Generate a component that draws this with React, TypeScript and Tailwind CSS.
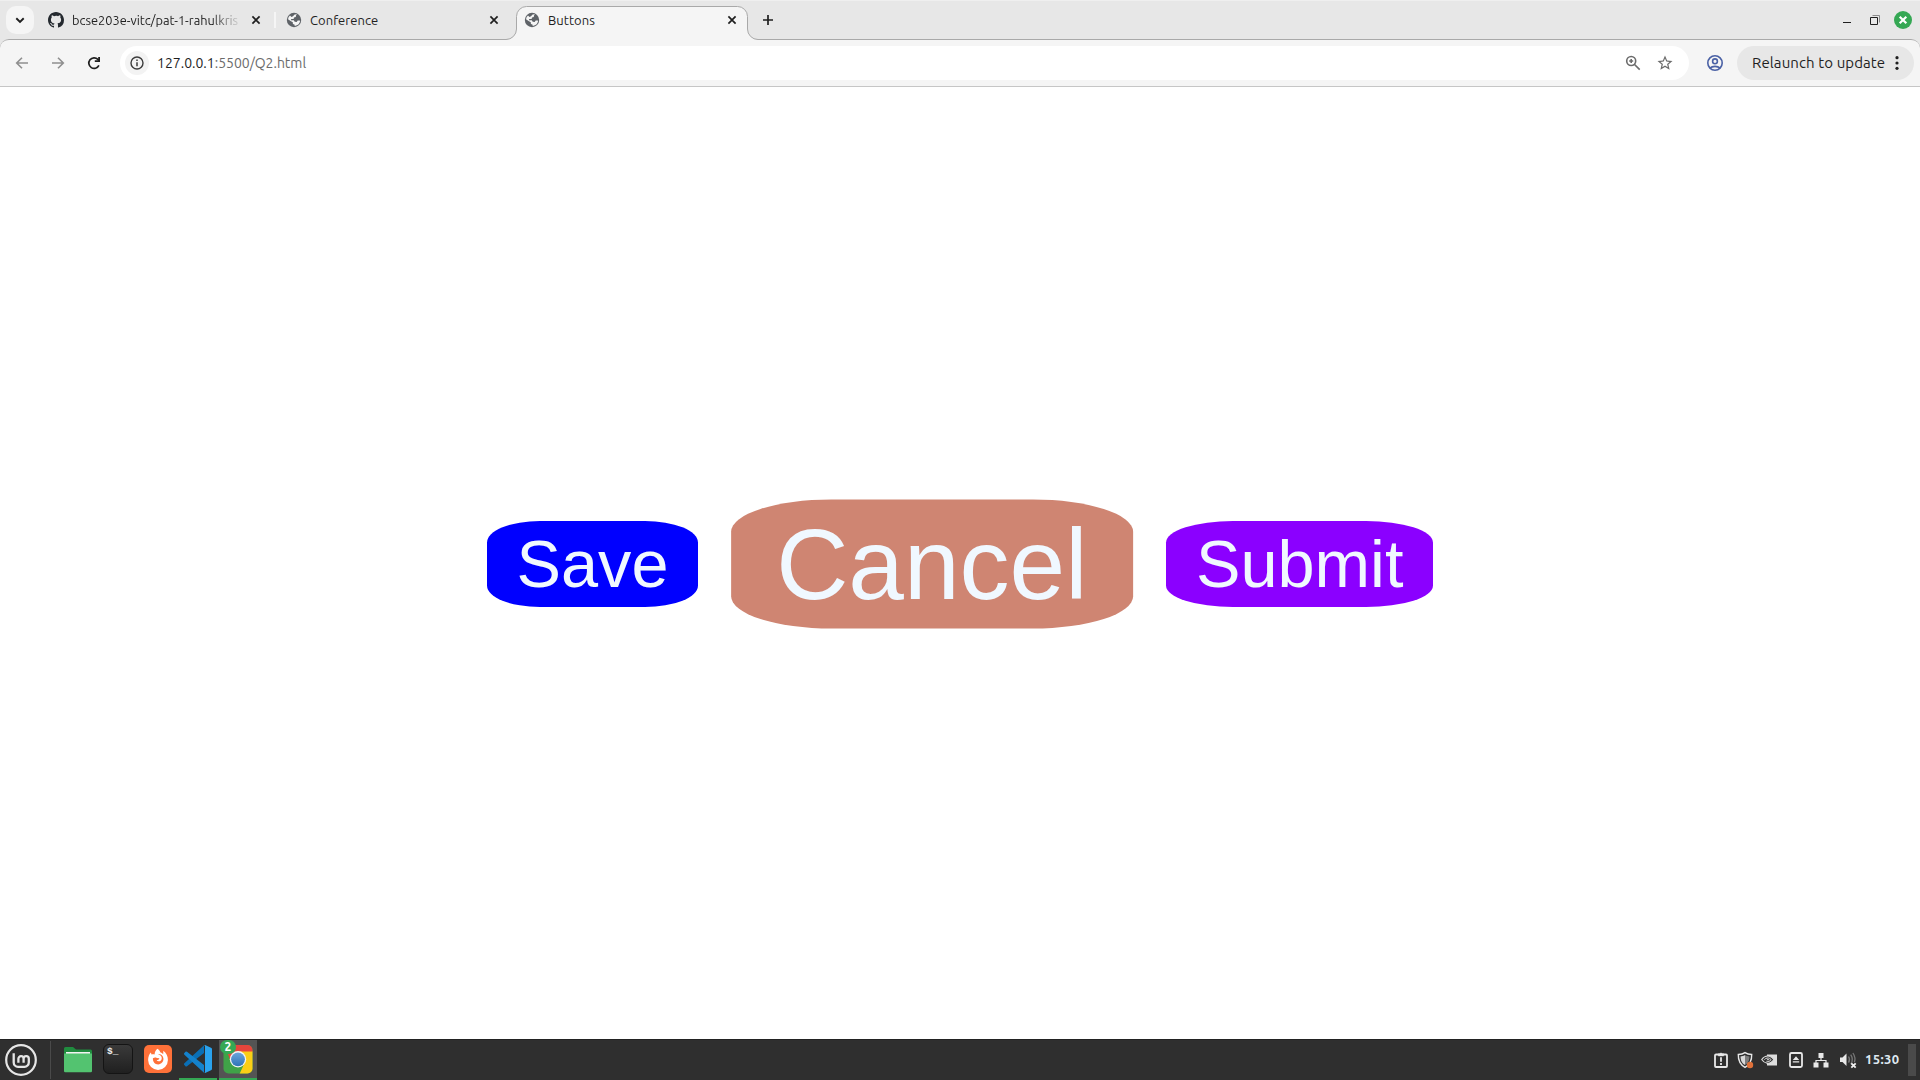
import React from "react";

function Globe() {
  return (
    <svg viewBox="0 0 16 16" className="size-4 shrink-0">
      <circle cx="8" cy="8" r="7.2" fill="#5f6368" />
      <path
        d="M8.600 2.400 11 2.200 10 3.500 9.800 5 8 5.600 7.600 7H5.200L5 8.300h2.800l.9 1.500 2 .1 1-1.300 2-.2.4.7a6 6 0 0 1-5.300 4.800l-.4-1.300-1.500-.6-.1-1.700L5 9.300 2 7.200A6 6 0 0 1 4 3.600L5.500 5 7 4.200z"
        fill="#f5f5f5"
      />
    </svg>
  );
}

function Close() {
  return (
    <svg viewBox="0 0 16 16" className="size-4 shrink-0" stroke="#1f1f1f" strokeWidth="1.7">
      <path d="M4.400 4.400l7.200 7.200M11.600 4.400l-7.200 7.200" />
    </svg>
  );
}

function TabStrip() {
  return (
    <div className="flex h-[39px] items-start border-t border-[#efefef] bg-[#e7e7e7]">
      <div className="ml-1.5 mt-[5px] flex size-7 items-center justify-center rounded-[10px] bg-[#f5f5f5]">
        <svg viewBox="0 0 16 16" className="size-4" fill="none" stroke="#1f1f1f" strokeWidth="1.9">
          <path d="M4.300 6.300 8 9.900l3.700-3.600" />
        </svg>
      </div>
      <div className="ml-[14px] flex h-[38px] w-[226px] items-center">
        <svg viewBox="0 0 16 16" className="size-4 shrink-0" fill="#24292f">
          <path d="M8 0C3.58 0 0 3.58 0 8c0 3.54 2.29 6.53 5.47 7.59.4.07.55-.17.55-.38 0-.19-.01-.82-.01-1.49-2.01.37-2.53-.49-2.69-.94-.09-.23-.48-.94-.82-1.13-.28-.15-.68-.52-.01-.53.63-.01 1.08.58 1.23.82.72 1.21 1.87.87 2.33.66.07-.52.28-.87.51-1.07-1.78-.2-3.64-.89-3.64-3.95 0-.87.31-1.59.82-2.15-.08-.2-.36-1.02.08-2.12 0 0 .67-.21 2.2.82A7.6 7.6 0 0 1 8 3.87c.68 0 1.36.09 2 .27 1.53-1.04 2.2-.82 2.2-.82.44 1.1.16 1.92.08 2.12.51.56.82 1.27.82 2.15 0 3.07-1.87 3.75-3.65 3.95.29.25.54.73.54 1.48 0 1.07-.01 1.93-.01 2.2 0 .21.15.46.55.38A8.01 8.01 0 0 0 16 8c0-4.42-3.58-8-8-8" />
        </svg>
        <span className="ml-2 w-[168px] overflow-hidden whitespace-nowrap pt-px text-[12.8px] text-[#1f1f1f] [mask-image:linear-gradient(to_right,black_140px,transparent_170px)]">
          bcse203e-vitc/pat-1-rahulkris
        </span>
        <span className="ml-2">
          <Close />
        </span>
      </div>
      <div className="mt-[11px] h-4 w-[2px] bg-[#f5f5f5]" />
      <div className="ml-[10px] flex h-[38px] w-[220px] shrink-0 items-center">
        <Globe />
        <span className="ml-2 w-[176px] pt-px text-[13px] tracking-[0.05px] text-[#1f1f1f]">Conference</span>
        <Close />
      </div>
      <svg viewBox="0 0 252 34" className="relative z-10 -mr-[252px] mt-[5px] h-[34px] w-[252px] shrink-0">
        <path
          d="M0 33.500A10.500 10.500 0 0 0 10.500 23V10.500A10 10 0 0 1 20.500.5H231.500A10 10 0 0 1 241.500 10.500V23A10.500 10.500 0 0 0 252 33.500V34H0z"
          fill="#f5f5f5"
        />
        <path
          d="M0 33.500A10.500 10.500 0 0 0 10.500 23V10.500A10 10 0 0 1 20.500.5H231.500A10 10 0 0 1 241.500 10.500V23A10.500 10.500 0 0 0 252 33.500"
          fill="none"
          stroke="#a9a9a9"
        />
      </svg>
      <div className="relative z-10 ml-[18px] flex h-[38px] w-[224px] items-center">
        <Globe />
        <span className="ml-2 w-[176px] pt-px text-[13px] tracking-[0.05px] text-[#1f1f1f]">Buttons</span>
        <Close />
      </div>
      <svg viewBox="0 0 16 16" className="ml-3 mt-[11px] size-4" stroke="#1f1f1f" strokeWidth="1.7">
        <path d="M8 3v10M3 8h10" />
      </svg>
      <div className="ml-auto flex h-[38px] items-center pr-2">
        <svg viewBox="0 0 10 10" className="size-[10px]" stroke="#1f1f1f" strokeWidth="1">
          <path d="M1 7.500h8" />
        </svg>
        <svg viewBox="0 0 12 12" className="ml-[17px] size-3" fill="none">
          <path d="M3.500 1.500h7v7" stroke="#8b8b8b" />
          <path d="M1.500 3.500h7v7h-7z" stroke="#1f1f1f" />
        </svg>
        <svg viewBox="0 0 18 18" className="ml-[13px] size-[18px]">
          <circle cx="9" cy="9" r="9" fill="#35a854" />
          <path d="M5.700 5.700l6.600 6.600M12.300 5.700l-6.600 6.600" stroke="#fff" strokeWidth="2.200" />
        </svg>
      </div>
    </div>
  );
}

function Toolbar() {
  return (
    <div className="bg-[#e7e7e7]">
      <div className="flex h-[48px] items-center rounded-t-[9px] border-t border-[#a9a9a9] bg-[#f5f5f5] pb-[1px] shadow-[inset_0_-1px_0_#c6c6c6]">
        <svg viewBox="0 0 16 16" className="ml-[14px] size-4" fill="none" stroke="#8f8f8f" strokeWidth="1.600">
          <path d="M14 8H3M8 2.700 2.700 8 8 13.300" />
        </svg>
        <svg viewBox="0 0 16 16" className="ml-5 size-4" fill="none" stroke="#8f8f8f" strokeWidth="1.600">
          <path d="M2 8h11M8 2.700 13.300 8 8 13.300" />
        </svg>
        <svg viewBox="0 0 16 16" className="ml-5 size-4">
          <path d="M12.900 10.400A5.300 5.300 0 1 1 11.900 4.400l1 1" fill="none" stroke="#1f1f1f" strokeWidth="1.700" />
          <path d="M14 1.900v5.200H8.800V5.300h3.400V1.900z" fill="#1f1f1f" />
        </svg>
        <div className="ml-[18px] flex h-[34px] w-[1569px] items-center rounded-full bg-white pl-[5px] pr-[15px]">
          <div className="flex size-6 items-center justify-center rounded-full bg-[#f3f3f3]">
            <svg viewBox="0 0 16 16" className="size-4" fill="none" stroke="#3c3c3c" strokeWidth="1.400">
              <circle cx="8" cy="8" r="6" />
              <path d="M8 7.200v4M8 4.500v1.500" strokeWidth="1.500" />
            </svg>
          </div>
          <span className="ml-2 pb-px text-[14px] leading-none text-[#6b6b6b]">
            <span className="text-[#1f1f1f]">127.0.0.1</span>:5500/Q2.html
          </span>
          <svg viewBox="0 0 16 16" className="ml-auto size-4" fill="none" stroke="#6b6b6b" strokeWidth="1.600">
            <circle cx="6.200" cy="6" r="4.500" />
            <path d="M9.300 9.200 14.700 14.600M6.200 4v4M4.200 6h4" />
          </svg>
          <svg viewBox="0 0 24 24" className="ml-[15px] size-[18px]" fill="#6b6b6b">
            <path d="M22 9.240l-7.190-.62L12 2 9.190 8.630 2 9.240l5.460 4.730L5.820 21 12 17.270 18.180 21l-1.630-7.030zM12 15.400l-3.760 2.270 1-4.280-3.320-2.880 4.380-.38L12 6.100l1.710 4.040 4.380.38-3.320 2.880 1 4.280z" />
          </svg>
        </div>
        <svg viewBox="0 0 18 18" className="ml-[17px] size-[18px]" fill="none" stroke="#4a61a5" strokeWidth="1.600">
          <circle cx="9" cy="9" r="7.200" />
          <circle cx="9" cy="7.300" r="2.400" />
          <path d="M3.800 14.200c2.800-2.500 7.600-2.500 10.400 0" />
        </svg>
        <div className="ml-[13px] flex h-[34px] w-[177px] items-center rounded-full bg-[#e7e7e7] pl-[15px]">
          <span className="w-[137px] whitespace-nowrap text-[15px] tracking-[0.1px] text-[#1f1f1f]">Relaunch to update</span>
          <svg viewBox="0 0 16 16" className="size-4" fill="#1f1f1f">
            <circle cx="8" cy="2.700" r="1.600" />
            <circle cx="8" cy="8" r="1.600" />
            <circle cx="8" cy="13.300" r="1.600" />
          </svg>
        </div>
      </div>
    </div>
  );
}

const pill =
  "rounded-[25%] px-[30px] py-[5px] font-['Liberation_Sans',Arial,sans-serif] text-[66.667px] leading-[76px] text-[#f0f8ff]";

function Launchers() {
  return (
    <>
      <svg viewBox="0 0 34 34" className="ml-1 size-[34px]" fill="none" stroke="#e6e6e6">
        <circle cx="17" cy="17" r="14.800" strokeWidth="2.200" />
        <path
          d="M9.700 10.200V19.500a4.300 4.300 0 0 0 4.300 4.300H20.500a4.300 4.300 0 0 0 4.300-4.300V15.800a2.600 2.600 0 0 0-5.200 0V19.700M19.600 15.800a2.600 2.600 0 0 0-5.200 0V19.700"
          strokeWidth="2.300"
        />
      </svg>
      <div className="ml-3 h-[38px] w-px bg-[#4a4a4a]" />
      <svg viewBox="0 0 28 28" className="mb-0.5 ml-[13px] size-7">
        <path d="M0 3.500A1.500 1.500 0 0 1 1.500 2H9l3 2.500h14.500A1.500 1.500 0 0 1 28 6v6H0z" fill="#208c3f" />
        <path d="M2 7h24v3H2z" fill="#f3f3f3" />
        <path d="M0 8.500h28V26a1.300 1.300 0 0 1-1.300 1.300H1.300A1.300 1.300 0 0 1 0 26z" fill="#53c370" />
      </svg>
      <div className="mb-0.5 ml-[11px] h-[30px] w-[30px] rounded-[6px] border border-[#141414] bg-gradient-to-b from-[#3a3a3a] to-[#202020] pl-[3px] pt-0.5 font-['Liberation_Mono',monospace] text-[9.500px] font-bold leading-[10px] text-[#eeeeee]">
        $_
      </div>
      <svg viewBox="0 0 28 28" className="mb-0.5 ml-[11px] size-7">
        <rect width="28" height="28" rx="5" fill="#ff7139" />
        <path
          d="M13.300 3.700c1.800 1 2.900 2.600 3.200 3.900 1.200.2 2.200.9 2.700 1.700l.1-3.500c3 2.200 4.700 5.600 4.600 9.100a9.900 9.900 0 0 1-19.800.2c0-3.500 1.300-6 2.700-7.600l.8 2c1.100-.5 2.100-.4 3 0 .1-2.400 1-4.200 2.700-5.800z"
          fill="#fff"
        />
        <path
          d="M8.900 13.200c1.500-.8 2.800-.8 3.900-.2l2.600.2c-.3 1.300-1.400 1.700-2.800 2 .7 1.300 2.800 1.500 4.300.2 1.400-1.200 1-3.500-.1-4.600-.8-.8-1.600-1.200-2.700-1.100 2.300-1.200 5 .9 5.300 3.900.3 3.200-2.100 5.800-5.200 5.800-3.300 0-5.500-2.700-5.300-6.200z"
          fill="#ff7139"
        />
      </svg>
      <div className="ml-[7px] flex h-10 w-[38px] items-center justify-center border-b-2 border-[#35a854]">
        <svg viewBox="0 0 28 28" className="size-7">
          <path d="M20 .3v7.700L3 21.200a1.300 1.300 0 0 1-1.600 0L.4 20.100a1.300 1.300 0 0 1 0-1.800z" fill="#0a6fb5" />
          <path d="M20 27.700v-7.700L3 6.800a1.300 1.300 0 0 0-1.600 0L.4 7.900a1.300 1.300 0 0 0 0 1.800z" fill="#1482cc" />
          <path d="M19.800.3a1.700 1.700 0 0 1 1.800-.1L27 2.800a1.700 1.700 0 0 1 1 1.500v19.400a1.700 1.700 0 0 1-1 1.500l-5.400 2.600a1.700 1.700 0 0 1-1.900-.2c.6.6 1.300.2 1.300-.7V1.100c0-.8-.7-1.200-1.200-.8z" fill="#2aa3ee" />
        </svg>
      </div>
      <div className="relative ml-0.5 flex h-10 w-[38px] items-center justify-center border-b-2 border-[#35a854] bg-[#545454]">
        <svg viewBox="0 0 30 30" className="size-[30px]">
          <defs>
            <clipPath id="chromeTile">
              <rect x=".5" y="1" width="29" height="28.500" rx="5" />
            </clipPath>
            <linearGradient id="chromeBlue" x2="0" y2="1">
              <stop stopColor="#6ca5dc" />
              <stop offset="1" stopColor="#2f73b7" />
            </linearGradient>
          </defs>
          <g clipPath="url(#chromeTile)">
            <path d="M0 0h30v30H0z" fill="#40a348" />
            <path d="M1 0h29v8H15l-7 10z" fill="#e8453c" />
            <path d="M15 7.500h15v22.500H16.500L22 18z" fill="#fbce16" />
          </g>
          <circle cx="15" cy="15.300" r="8.200" fill="#f4f4f4" />
          <circle cx="15" cy="15.300" r="6.900" fill="url(#chromeBlue)" />
        </svg>
        <span className="absolute left-px top-0 flex h-[14px] w-4 items-center justify-center rounded-full bg-[#35a854] text-[12px] font-bold leading-none text-white">
          2
        </span>
      </div>
    </>
  );
}

function Tray() {
  return (
    <div className="ml-auto flex items-center">
      <svg viewBox="0 0 16 18" className="h-[18px] w-4" fill="none" stroke="#e8e8e8">
        <rect x="2" y="3.500" width="12" height="12.500" rx="1" strokeWidth="1.800" />
        <path d="M5.300 5V2.700h1.500a1.300 1.300 0 0 1 2.400 0h1.500V5z" fill="#e8e8e8" strokeWidth=".4" />
        <path d="M8 6.300v4.400M8 12v1.900" strokeWidth="1.800" />
      </svg>
      <svg viewBox="0 0 18 18" className="ml-[7px] size-[18px]">
        <path d="M9 1.600c2.200 1.600 4.500 1.900 6.700 1.900.2 6-1.600 10-6.700 12.900C3.900 13.500 2.100 9.500 2.300 3.500c2.200 0 4.500-.3 6.700-1.900z" fill="none" stroke="#e8e8e8" strokeWidth="1.400" />
        <path d="M9 4v10C5.700 12 4.700 9.500 4.500 5.500 6 5.400 7.600 5 9 4z" fill="#d8d8d8" />
        <path d="M9 4v10c3.300-2 4.300-4.500 4.500-8.500C12 5.400 10.400 5 9 4z" fill="#7c7c7c" />
        <circle cx="14" cy="14" r="3.200" fill="#e0713a" />
      </svg>
      <svg viewBox="0 0 16 12" className="ml-[7px] h-3 w-4">
        <path d="M6 .5h10v11H6z" fill="#dedede" />
        <path d="M.7 5.500C3 2.500 6 1.600 8.500 2.300c2 .6 3.300 2 4.300 3.200-2 3-4.300 4-6.800 3.600C3.700 8.800 2 7.500.7 5.500z" fill="#2f2f2f" stroke="#dedede" strokeWidth="1.100" />
        <path d="M3.400 5.600C5 3.900 7 3.600 8.600 4.400L10.200 5.700C8.800 7.500 7 8 5.400 7.200M6 5.700h2.200" fill="none" stroke="#dedede" strokeWidth="1" />
      </svg>
      <svg viewBox="0 0 16 18" className="ml-[11px] h-[18px] w-4" fill="none" stroke="#e8e8e8">
        <rect x="2" y="2" width="12" height="14" rx="1.500" strokeWidth="1.800" />
        <path d="M8 5.300 11.200 9H4.800zM4.800 10.300h6.400v1.300H4.800z" fill="#e8e8e8" stroke="none" />
      </svg>
      <svg viewBox="0 0 16 16" className="ml-[9px] size-4" fill="#e8e8e8">
        <path d="M5.500 1h5v5h-5zM.5 10.500h5v5h-5zM10.500 10.500h5v5h-5zM7.400 6h1.200v1.900h5V11h-1.200V9H3.600v2H2.400V7.900h5z" />
      </svg>
      <svg viewBox="0 0 18 18" className="ml-[10px] size-[18px]" fill="none">
        <path d="M1 6.500h2.500l4-4v12.500l-4-4H1z" fill="#e8e8e8" />
        <path d="M9.500 5.500c1.200 1.800 1.200 4.400 0 6.200M11.700 3.700c2 3 2 6.600.2 9.500M13.900 2c2.200 3.200 2.500 6.400 1.500 9.300" stroke="#777" strokeWidth="1.300" />
        <path d="M12.300 12.300l4.400 4.400M16.700 12.300l-4.400 4.400" stroke="#f0f0f0" strokeWidth="1.800" />
      </svg>
      <span className="ml-[8px] w-[43px] text-[13px] font-bold tracking-[0.400px] text-[#dfe9f2]">15:30</span>
      <div className="mr-1 h-8 w-2 bg-[#4a4a4a]" />
    </div>
  );
}

export default function App() {
  return (
    <div className="flex h-[1080px] w-[1920px] flex-col overflow-hidden bg-white font-['Ubuntu','Noto_Sans',sans-serif]">
      <TabStrip />
      <Toolbar />
      <main className="flex flex-1 items-center justify-center gap-[100px] pt-[2px]">
        <button className={`${pill} bg-[#0000ff]`}>Save</button>
        <button className={`${pill} scale-150 bg-[#cf8572]`}>Cancel</button>
        <button className={`${pill} bg-[#8b00ff]`}>Submit</button>
      </main>
      <footer className="flex h-[41px] items-center border-t border-[#222222] bg-[#2f2f2f]">
        <Launchers />
        <Tray />
      </footer>
    </div>
  );
}
